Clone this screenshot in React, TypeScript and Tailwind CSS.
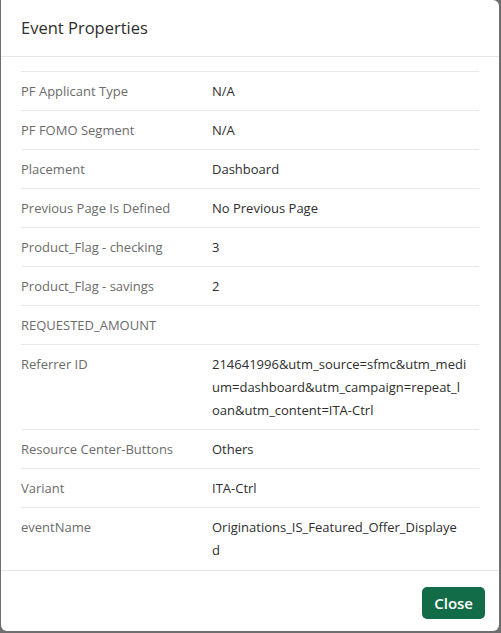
const rows: [string, string[]][] = [
  ["PF Applicant Type", ["N/A"]],
  ["PF FOMO Segment", ["N/A"]],
  ["Placement", ["Dashboard"]],
  ["Previous Page Is Defined", ["No Previous Page"]],
  ["Product_Flag - checking", ["3"]],
  ["Product_Flag - savings", ["2"]],
  ["REQUESTED_AMOUNT", []],
  [
    "Referrer ID",
    ["214641996&utm_source=sfmc&utm_medi", "um=dashboard&utm_campaign=repeat_l", "oan&utm_content=ITA-Ctrl"],
  ],
  ["Resource Center-Buttons", ["Others"]],
  ["Variant", ["ITA-Ctrl"]],
  ["eventName", ["Originations_IS_Featured_Offer_Displaye", "d"]],
];

export default function App() {
  return (
    <div className="h-[633px] w-[501px] bg-[#6e6e6e] pl-px pr-0.5 pb-0.5 font-['Open_Sans',sans-serif]">
      <div className="flex h-full flex-col overflow-hidden rounded-b-md rounded-tr-md bg-white">
        {/* Header */}
        <div className="flex h-[57px] shrink-0 items-center border-b border-[#e6e6e6] px-5">
          <h2 className="text-[16.5px] text-[#2e2e2e]">Event Properties</h2>
        </div>

        {/* Body */}
        <div className="flex-1 px-5 pt-[14px]">
          {rows.map(([label, lines]) => (
            <div key={label} className="flex border-t border-[#e8e8e8] pt-2 pb-[7px] text-[13px] leading-[23px]">
              <div className="w-[191px] shrink-0 text-[#6b6b6b]">{label}</div>
              <div className="w-[270px] text-[#2e2e2e]">
                {lines.map((l) => (
                  <div key={l} className="whitespace-nowrap">{l}</div>
                ))}
              </div>
            </div>
          ))}
        </div>

        {/* Footer */}
        <div className="flex h-[61px] shrink-0 items-start justify-end border-t border-[#e6e6e6] px-[14px] pt-4">
          <button className="h-8 rounded-[5px] bg-[#136c48] px-3 text-[15px] font-semibold text-white">
            Close
          </button>
        </div>
      </div>
    </div>
  );
}
